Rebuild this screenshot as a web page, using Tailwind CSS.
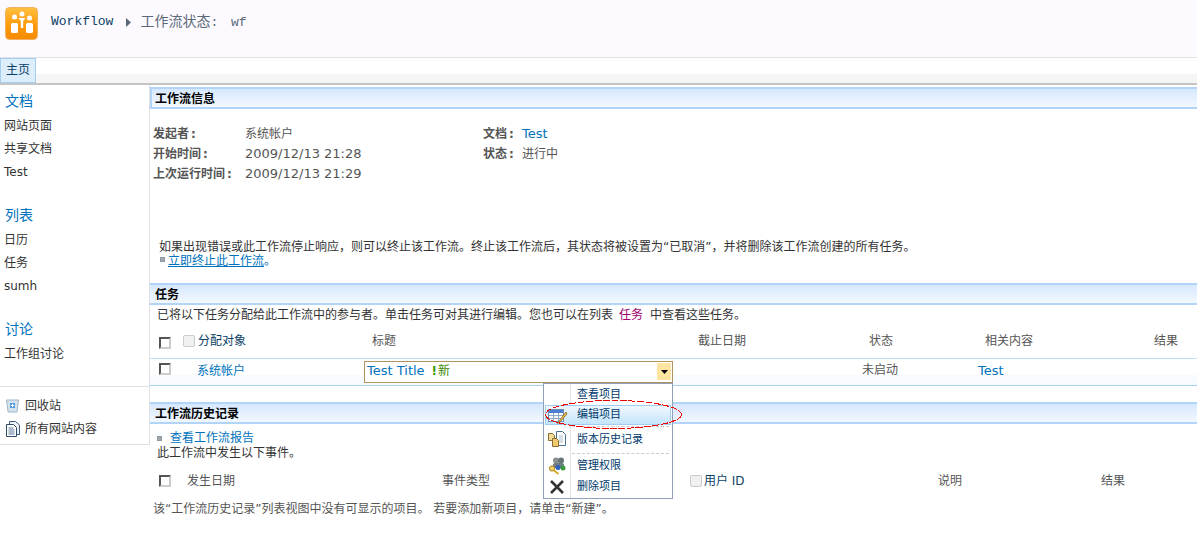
<!DOCTYPE html>
<html lang="zh">
<head>
<meta charset="utf-8">
<script src="https://cdn.jsdelivr.net/npm/@tailwindcss/browser@4"></script>
</head>
<body class="bg-white">
<div class="relative w-[1197px] h-[555px] overflow-hidden text-[12px] leading-[14px] text-[#555] font-['DejaVu_Sans','Noto_Sans_CJK_SC',sans-serif]">

  <!-- header -->
  <header class="h-[58px] bg-[#fdfaff] border-b border-[#e2e0e4] flex items-start">
    <svg class="ml-[5px] mt-[7px] shrink-0" width="34" height="34" viewBox="0 0 34 34">
      <defs><linearGradient id="lg" x1="0" y1="0" x2="0" y2="1"><stop offset="0" stop-color="#ffc040"/><stop offset="0.55" stop-color="#ff9a0c"/><stop offset="1" stop-color="#f58a00"/></linearGradient></defs>
      <rect x="0.5" y="0.5" width="32" height="32" rx="4" fill="url(#lg)" stroke="#f0b060"/>
      <circle cx="9.500" cy="10" r="2.500" fill="#fff"/><circle cx="17" cy="7" r="2.500" fill="#fff"/><circle cx="24.500" cy="11" r="2.500" fill="#fff"/>
      <rect x="6" y="16" width="7" height="10" rx="1.500" fill="#fff"/><rect x="21" y="16" width="7" height="10" rx="1.500" fill="#fff"/>
      <path d="M13.500 11h7l-2.300 3v7h-2.400v-7z" fill="#fff"/>
    </svg>
    <div class="ml-[12px] mt-[14px] h-[16px] flex items-center text-[14px] leading-[16px] text-[#5a6878]">
      <span class="font-['Liberation_Mono',monospace] text-[13px] text-[#0b3f66]">Workflow</span>
      <svg class="ml-[13px] mr-[9px]" width="5" height="9" viewBox="0 0 5 9"><path d="M0 0l5 4.500L0 9z" fill="#5a6878"/></svg>
      <span>工作流状态<span class="font-['Liberation_Mono',monospace] text-[13px]">:<span class="ml-[5px]"> wf</span></span></span>
    </div>
  </header>

  <!-- tabs -->
  <nav class="h-[27px] flex border-b-2 border-[#c4c4c4] bg-[linear-gradient(#fff_16px,#f5f5f5_16px)]">
    <div class="w-[36px] h-[25px] pb-[2px] bg-[#dcedfb] border border-[#a4cff0] flex items-center justify-center text-[#0b3f66]">主页</div>
  </nav>

  <div class="flex items-start">
    <!-- sidebar -->
    <aside class="w-[150px] shrink-0 h-[360px] border-r border-b border-[#e0e0e0] text-[#333] flex flex-col">
      <div class="mt-[8px] pl-[5px] h-[16px] text-[14px] leading-[16px] text-[#0072bc]">文档</div>
      <div class="pl-[4px] mt-[10px] flex flex-col gap-[9px]">
        <span>网站页面</span><span>共享文档</span><span>Test</span>
      </div>
      <div class="mt-[28px] pl-[5px] h-[16px] text-[14px] leading-[16px] text-[#0072bc]">列表</div>
      <div class="pl-[4px] mt-[10px] flex flex-col gap-[9px]">
        <span>日历</span><span>任务</span><span>sumh</span>
      </div>
      <div class="mt-[28px] pl-[5px] h-[16px] text-[14px] leading-[16px] text-[#0072bc]">讨论</div>
      <div class="pl-[4px] mt-[10px]">工作组讨论</div>
      <div class="mt-[25px] border-t border-[#e0e0e0] pt-[12px] flex flex-col gap-[9px]">
        <div class="flex items-center h-[14px]">
          <svg class="ml-[6px] mr-[6px]" width="13" height="14" viewBox="0 0 13 14"><path d="M0.500 1h12l-1.600 12H2.100z" fill="#d5e3ee" stroke="#a0b4c4"/><rect x="4" y="4" width="5" height="5" fill="#4f9ade"/><path d="M6.500 4.800v3.400M4.800 6.500h3.400" stroke="#fff"/></svg>
          <span>回收站</span>
        </div>
        <div class="flex items-center h-[14px]">
          <svg class="ml-[6px] mr-[5px]" width="14" height="16" viewBox="0 0 14 16"><path d="M3.500 3.500V.5h6l4 3.500v9.500h-3" fill="#eef3f8" stroke="#3e5a78"/><path d="M.5 3.500h7l3 3v9h-10z" fill="#fff" stroke="#2f4a68"/><path d="M2.500 7h5M2.500 9h6M2.500 11h6M2.500 13h6" stroke="#5a7896"/></svg>
          <span>所有网站内容</span>
        </div>
      </div>
    </aside>

    <!-- main -->
    <main class="flex-1 min-w-0 pt-[2px]">
      <div class="h-[22px] pt-[2px] border-y-2 border-l-2 border-[#b2d4f8] bg-[linear-gradient(#d6e8fd,#f3f8ff)] pl-[3px] flex items-center font-bold text-black">工作流信息</div>

      <div class="mt-[15px] pl-[3px] flex">
        <div class="w-[330px] grid grid-cols-[92px_1fr] auto-rows-[20px] items-center">
          <b class="text-[#555]">发起者<span class="ml-[2px]">:</span></b><span>系统帐户</span>
          <b class="text-[#555]">开始时间<span class="ml-[2px]">:</span></b><span class="text-[13px]">2009/12/13 21:28</span>
          <b class="text-[#555]">上次运行时间<span class="ml-[2px]">:</span></b><span class="text-[13px]">2009/12/13 21:29</span>
        </div>
        <div class="grid grid-cols-[39px_1fr] auto-rows-[20px] items-center">
          <b class="text-[#555]">文档<span class="ml-[2px]">:</span></b><span class="text-[13px] text-[#0072bc]">Test</span>
          <b class="text-[#555]">状态<span class="ml-[2px]">:</span></b><span>进行中</span>
        </div>
      </div>

      <p class="mt-[56px] pl-[9px] text-[#333] whitespace-nowrap">如果出现错误或此工作流停止响应，则可以终止该工作流。终止该工作流后，其状态将被设置为“已取消”，并将删除该工作流创建的所有任务。</p>
      <div class="pl-[10px] flex items-center h-[14px]">
        <span class="w-[5px] h-[5px] -mt-[3px] bg-[#a8a8a8] border border-[#8a9aa8]"></span>
        <span class="ml-[3px] text-[#0072bc]"><span class="underline">立即终止此工作流</span>。</span>
      </div>

      <div class="mt-[15px] h-[22px] pt-[2px] border-y-2 border-[#b2d4f8] bg-[linear-gradient(#d6e8fd,#f3f8ff)] pl-[5px] flex items-center font-bold text-black">任务</div>
      <p class="mt-[3px] pl-[7px] text-[#333] whitespace-nowrap">已将以下任务分配给此工作流中的参与者。单击任务可对其进行编辑。您也可以在列表<span class="ml-[6px] mr-[7px] text-[#a0006e]">任务</span>中查看这些任务。</p>

      <div class="h-[37px] pt-[2px] border-b border-[#bfe0fa] flex items-center relative">
        <span class="ml-[9px] mt-[4px] w-[12px] h-[12px] border-2 border-t-[#555] border-l-[#555] border-r-[#ccc] border-b-[#ccc]"></span>
        <span class="ml-[12px] w-[12px] h-[12px] rounded-[2px] border border-[#ccc] bg-[#f0f0f0]"></span>
        <span class="ml-[3px] w-[174px] text-[#0b3f66]">分配对象</span>
        <span class="w-[326px]">标题</span>
        <span class="w-[171px]">截止日期</span>
        <span class="w-[116px]">状态</span>
        <span class="w-[169px]">相关内容</span>
        <span>结果</span>
      </div>
      <div class="h-[27px] border-b border-[#a6d0f2] bg-[linear-gradient(#fff_16px,#f7faff_16px)] flex items-start">
        <span class="ml-[9px] mt-[4px] w-[12px] h-[12px] border-2 border-t-[#555] border-l-[#555] border-r-[#ccc] border-b-[#ccc] shrink-0"></span>
        <span class="ml-[26px] w-[167px] mt-[5px] text-[#0072bc]">系统帐户</span>
        <div class="w-[309px] h-[22px] mt-[2px] pb-[2px] border border-[#b09460] bg-white flex items-center pl-[2px] text-[13px] text-[#0072bc] relative">
          <span>Test Title</span>
          <span class="ml-[7px] text-[#3c9a00] font-bold text-[12px]">!</span><span class="ml-px text-[12px] text-[#3c8a00]">新</span>
          <span class="absolute right-px top-px w-[14px] h-[17px] bg-[#ffe5a0] flex items-center justify-center"><svg width="7" height="4" viewBox="0 0 7 4"><path d="M0 0h7L3.500 4z" fill="#000"/></svg></span>
        </div>
        <span class="ml-[189px] w-[116px] mt-[4px]">未启动</span>
        <span class="mt-[5px] text-[13px] text-[#0072bc]">Test</span>
      </div>

      <div class="mt-[16px] h-[22px] pt-[2px] border-y-2 border-[#b2d4f8] bg-[linear-gradient(#d6e8fd,#f3f8ff)] pl-[5px] flex items-center font-bold text-black">工作流历史记录</div>
      <div class="mt-[7px] pl-[7px] flex items-center h-[14px]">
        <span class="w-[5px] h-[5px] bg-[#a8a8a8] border border-[#8a9aa8]"></span>
        <span class="ml-[8px] text-[#0072bc]">查看工作流报告</span>
      </div>
      <p class="mt-[1px] pl-[7px] text-[#333]">此工作流中发生以下事件。</p>
      <div class="mt-[8px] h-[26px] flex items-center">
        <span class="ml-[9px] w-[12px] h-[12px] border-2 border-t-[#555] border-l-[#555] border-r-[#ccc] border-b-[#ccc]"></span>
        <span class="ml-[16px] w-[255px]">发生日期</span>
        <span class="w-[248px]">事件类型</span>
        <span class="w-[12px] h-[12px] rounded-[2px] border border-[#ccc] bg-[#f0f0f0]"></span>
        <span class="ml-[2px] w-[234px] text-[#0b3f66]">用户 ID</span>
        <span class="w-[163px]">说明</span>
        <span>结果</span>
      </div>
      <p class="mt-[8px] pl-[3px] whitespace-nowrap">该“工作流历史记录”列表视图中没有可显示的项目。 若要添加新项目，请单击“新建”。</p>
    </main>
  </div>

  <!-- dropdown menu -->
  <div class="absolute left-[543px] top-[383px] w-[130px] h-[116px] pt-px border border-[#8fa0b8] bg-white text-[11px] leading-[14px] text-[#003a6b] flex flex-col">
    <div class="absolute left-[26px] top-0 bottom-0 w-px bg-[#e4e4e4]"></div>
    <div class="h-[20px] pl-[33px] flex items-center">查看项目</div>
    <div class="h-[20px] mx-px bg-[linear-gradient(#f0f8ff,#c4e4fb)] border border-[#a0cdf0] pl-[31px] flex items-center relative">
      <svg class="absolute left-[2px] top-[2px]" width="20" height="16" viewBox="0 0 20 16"><rect x="0.5" y="1.500" width="15" height="12" fill="#fff" stroke="#6f8fb5"/><rect x="1" y="2" width="14" height="3" fill="#4a7fd0"/><path d="M1 7.500h14M1 10.500h14M5.500 5v8M10.500 5v8" stroke="#8fa8c8"/><path d="M18 4l-7 9-1.500 2.500 2.500-1.500 7-8z" fill="#f0c040" stroke="#7a5a20" stroke-width="0.700"/></svg>
      编辑项目
    </div>
    <div class="mt-[1px] ml-[28px] mr-[3px] border-t border-dashed border-[#ccc]"></div>
    <div class="h-[25px] pl-[33px] flex items-center relative">
      <svg class="absolute left-[4px] top-[3px]" width="18" height="18" viewBox="0 0 18 18"><path d="M8.500 1.500h6l3 3v11h-9z" fill="#fff" stroke="#4f6f90"/><path d="M11 6h4M11 8h4M11 10h4M11 12h4" stroke="#a8bccf"/><path d="M.5 3.500h4l2 2v5h-6z" fill="#f4dc9a" stroke="#8a7030"/><path d="M4.500 8.500h4l2 2v6h-6z" fill="#efc870" stroke="#8a7030"/></svg>
      版本历史记录
    </div>
    <div class="mt-[1px] ml-[28px] mr-[3px] border-t border-dashed border-[#ccc]"></div>
    <div class="h-[24px] pl-[33px] flex items-center relative">
      <svg class="absolute left-[4px] top-[3px]" width="18" height="18" viewBox="0 0 18 18"><circle cx="8" cy="3.500" r="3" fill="#8a9090"/><circle cx="13" cy="3.500" r="3" fill="#667478"/><rect x="5" y="6" width="11" height="5" rx="2" fill="#707c80"/><circle cx="10" cy="10.500" r="2.500" fill="#2a5fc0"/><circle cx="15" cy="11" r="2.500" fill="#3a9a40"/><circle cx="4" cy="11.500" r="2.600" fill="#f0d070" stroke="#a88418"/><path d="M6 13.500l4.500 3.500" stroke="#d8a828" stroke-width="2"/></svg>
      管理权限
    </div>
    <div class="h-[20px] -mt-[1px] pl-[33px] flex items-center relative">
      <svg class="absolute left-[6px] top-[3px]" width="14" height="14" viewBox="0 0 14 14"><path d="M1 1l12 12M13 1L1 13" stroke="#333" stroke-width="2.600"/></svg>
      删除项目
    </div>
  </div>

  <!-- hand-drawn highlight -->
  <svg class="absolute left-[543px] top-[398px] pointer-events-none" width="142" height="33" viewBox="0 0 142 33" shape-rendering="crispEdges"><ellipse cx="70.500" cy="16.500" rx="68" ry="14" fill="none" stroke="#f00000" stroke-dasharray="7 1.500"/></svg>
</div>
</body>
</html>
